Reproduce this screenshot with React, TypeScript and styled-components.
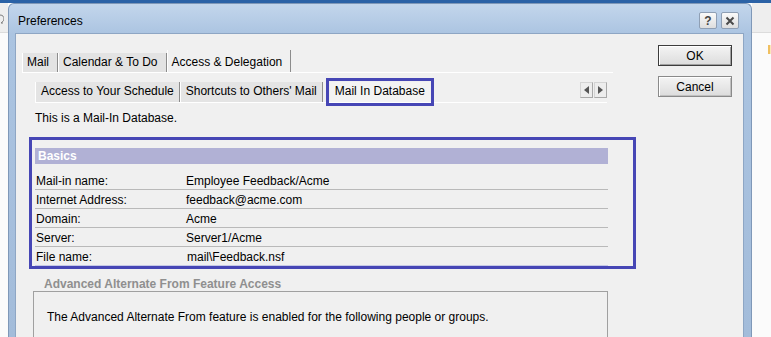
import React from "react";
import styled, { createGlobalStyle } from "styled-components";

const Global = createGlobalStyle`
  html, body { margin: 0; padding: 0; background: #ffffff; }
  body { font-family: "Liberation Sans", Arial, sans-serif; font-size: 12px; color: #000; }
  * { box-sizing: border-box; }
`;

const Page = styled.div`
  width: 771px;
  height: 337px;
  overflow: hidden;
  display: flex;
  flex-direction: column;
  background: #ffffff;
`;

const TopStrip = styled.div`
  height: 3px;
  flex: none;
  background: #2b62a6;
`;

const Body = styled.div`
  flex: 1;
  display: flex;
  min-height: 0;
`;

const Desk = styled.div<{ $w?: number }>`
  flex: ${(p) => (p.$w ? `0 0 ${p.$w}px` : "1")};
  display: flex;
  flex-direction: column;
  overflow: hidden;
`;

const DeskBar = styled.div`
  height: 30px;
  flex: none;
  background: #eeeeee;
  border-bottom: 1px solid #dcdcdc;
  display: flex;
  align-items: center;
`;

const DeskIcon = styled.svg`
  margin-top: 2px;
  flex: none;
`;

const DeskFill = styled.div`
  flex: 1;
  background: #fbfbfb;
  display: flex;
  flex-direction: column;
`;

const Mark = styled.div`
  margin: 12px 0 0 16px;
  width: 6px;
  height: 9px;
  background: #fbe6b8;
  border-left: 2px solid #f0c060;
`;

const Window = styled.div`
  flex: 0 0 744px;
  display: flex;
  flex-direction: column;
  background: linear-gradient(to bottom, #c3d6ec 0px, #abc4e1 30px, #a3bcda 100%);
  border: 1px solid #7f98b8;
  border-bottom: none;
  border-radius: 6px 6px 0 0;
  padding: 0 7px 0 6px;
`;

const TitleBar = styled.div`
  height: 29px;
  flex: none;
  display: flex;
  align-items: center;
  padding: 4px 5px 0 3px;
`;

const Title = styled.div`
  flex: 1;
  font-family: "Liberation Sans", Arial, sans-serif;
  font-size: 12px;
  color: #000;
`;

const CaptionButtons = styled.div`
  display: flex;
  gap: 4px;
`;

const CaptionButton = styled.div`
  width: 18px;
  height: 17px;
  border: 1px solid #8f9fb4;
  border-radius: 2px;
  background: linear-gradient(to bottom, #fafafa, #dedede);
  display: flex;
  align-items: center;
  justify-content: center;
  font-family: "Liberation Sans", Arial, sans-serif;
  font-weight: bold;
  font-size: 12px;
  color: #444;
`;

const Client = styled.div`
  flex: 1;
  display: flex;
  background: #f0f0f0;
  border: 1px solid #8ea6c4;
  border-bottom: none;
  min-height: 0;
`;

const MainPane = styled.div`
  flex: 1;
  padding: 16px 0 0 6px;
  display: flex;
  flex-direction: column;
`;

const TabStrip = styled.div<{ $width: number }>`
  display: flex;
  align-items: flex-end;
  width: ${(p) => p.$width}px;
  border-bottom: 1px solid #ffffff;
  flex: none;
`;

const MainTab = styled.div<{ $active?: boolean }>`
  height: ${(p) => (p.$active ? 22 : 19)}px;
  padding: ${(p) => (p.$active ? "3px" : "0")} 8px 0 4px;
  line-height: 19px;
  background: ${(p) => (p.$active ? "#f0f0f0" : "#e3e3e3")};
  border-left: 1px solid #ffffff;
  border-right: 1px solid #8c8c8c;
  white-space: nowrap;
`;

const Panel = styled.div`
  padding: 9px 0 0 13px;
  display: flex;
  flex-direction: column;
`;

const SubTabRow = styled.div`
  width: 572px;
  display: flex;
  align-items: flex-end;
  border-bottom: 1px solid #ffffff;
  height: 21px;
`;

const SubTab = styled.div<{ $active?: boolean }>`
  height: 20px;
  line-height: 19px;
  padding: 0 5px 0 5px;
  background: ${(p) => (p.$active ? "#f3f3f3" : "#e4e4e4")};
  border-right: ${(p) => (p.$active ? "none" : "1px solid #8c8c8c")};
  border-left: ${(p) => (p.$active ? "none" : "1px solid #ffffff")};
  margin-left: ${(p) => (p.$active ? "7px" : "0")};
  outline: ${(p) => (p.$active ? "3px solid #4646b5" : "none")};
  outline-offset: ${(p) => (p.$active ? "1px" : "0")};
  white-space: nowrap;
`;

const Spacer = styled.div`
  flex: 1;
`;

const ScrollButtons = styled.div`
  display: flex;
  gap: 1px;
  margin-bottom: 4px;
`;

const ScrollButton = styled.div`
  width: 13px;
  height: 16px;
  background: #ededed;
  border: 1px solid #d4d4d4;
  border-right-color: #a9a9a9;
  border-bottom-color: #a9a9a9;
  display: flex;
  align-items: center;
  justify-content: center;
`;

const Intro = styled.div`
  margin-top: 8px;
  line-height: 15px;
  height: 15px;
`;

const Highlight = styled.div`
  margin: 11px 0 0 -6px;
  width: 607px;
  border: 3px solid #4646b5;
  padding: 8px 25px 0 3px;
`;

const SectionHeader = styled.div`
  height: 16px;
  line-height: 16px;
  background: #b1b1d5;
  color: #ffffff;
  font-weight: bold;
  padding-left: 3px;
  margin-bottom: 7px;
`;

const Row = styled.div<{ $last?: boolean }>`
  display: grid;
  grid-template-columns: 150px 1fr;
  height: 19px;
  line-height: 18px;
  padding: 1px 0 0 1px;
  border-bottom: 1px solid ${(p) => (p.$last ? "#c5c8e6" : "#b9b9b9")};
`;

const Value = styled.span<{ $shift?: number }>`
  padding-left: ${(p) => p.$shift ?? 0}px;
`;

const SubHeading = styled.div`
  margin: 8px 0 0 9px;
  height: 14px;
  line-height: 14px;
  font-weight: bold;
  color: #8f8f8f;
`;

const GroupBox = styled.div`
  margin: 0 0 0 -2px;
  width: 575px;
  height: 60px;
  border: 1px solid #a0a0a0;
  border-bottom: none;
  padding: 18px 0 0 13px;
  line-height: 15px;
`;

const ButtonColumn = styled.div`
  flex: 0 0 85px;
  padding: 11px 0 0 0;
  display: flex;
  flex-direction: column;
  gap: 10px;
`;

const DialogButton = styled.div<{ $default?: boolean }>`
  width: 74px;
  height: 21px;
  display: flex;
  align-items: center;
  justify-content: center;
  border: 1px solid ${(p) => (p.$default ? "#3c3c3c" : "#8a8a8a")};
  box-shadow: inset 1px 1px 0 #ffffff, inset -1px -1px 0 ${(p) => (p.$default ? "#a0a0a0" : "#c0c0c0")};
  background: linear-gradient(to bottom, #f4f4f4, #dcdcdc);
  font-size: 12px;
`;

const rows: { label: string; value: string; shift?: number }[] = [
  { label: "Mail-in name:", value: "Employee Feedback/Acme" },
  { label: "Internet Address:", value: "feedback@acme.com" },
  { label: "Domain:", value: "Acme" },
  { label: "Server:", value: "Server1/Acme" },
  { label: "File name:", value: "mail\\Feedback.nsf", shift: 1 },
];

export default function App() {
  return (
    <>
      <Global />
      <Page>
        <TopStrip />
        <Body>
          <Desk $w={8}>
            <DeskBar>
              <DeskIcon width="4" height="10" viewBox="0 0 4 10">
                <path d="M0 1 C3 1 4 3 4 5 C4 7 2 8 1 9 L3 9" fill="none" stroke="#7a7a7a" strokeWidth="1" />
              </DeskIcon>
            </DeskBar>
            <DeskFill />
          </Desk>
          <Window>
            <TitleBar>
              <Title>Preferences</Title>
              <CaptionButtons>
                <CaptionButton>?</CaptionButton>
                <CaptionButton>
                  <svg width="10" height="10" viewBox="0 0 10 10">
                    <path d="M1.5 1.5 L8.5 8.5 M8.5 1.5 L1.5 8.5" stroke="#4a4a4a" strokeWidth="2" />
                  </svg>
                </CaptionButton>
              </CaptionButtons>
            </TitleBar>
            <Client>
              <MainPane>
                <TabStrip $width={591}>
                  <MainTab>Mail</MainTab>
                  <MainTab>Calendar &amp; To Do</MainTab>
                  <MainTab $active>Access &amp; Delegation</MainTab>
                </TabStrip>
                <Panel>
                  <SubTabRow>
                    <SubTab>Access to Your Schedule</SubTab>
                    <SubTab>Shortcuts to Others' Mail</SubTab>
                    <SubTab $active>Mail In Database</SubTab>
                    <Spacer />
                    <ScrollButtons>
                      <ScrollButton>
                        <svg width="5" height="8" viewBox="0 0 5 8">
                          <path d="M5 0 L0 4 L5 8 Z" fill="#555" />
                        </svg>
                      </ScrollButton>
                      <ScrollButton>
                        <svg width="5" height="8" viewBox="0 0 5 8">
                          <path d="M0 0 L5 4 L0 8 Z" fill="#555" />
                        </svg>
                      </ScrollButton>
                    </ScrollButtons>
                  </SubTabRow>
                  <Intro>This is a Mail-In Database.</Intro>
                  <Highlight>
                    <SectionHeader>Basics</SectionHeader>
                    {rows.map((r, i) => (
                      <Row key={r.label} $last={i === rows.length - 1}>
                        <span>{r.label}</span>
                        <Value $shift={r.shift}>{r.value}</Value>
                      </Row>
                    ))}
                  </Highlight>
                  <SubHeading>Advanced Alternate From Feature Access</SubHeading>
                  <GroupBox>
                    The Advanced Alternate From feature is enabled for the following people or groups.
                  </GroupBox>
                </Panel>
              </MainPane>
              <ButtonColumn>
                <DialogButton $default>OK</DialogButton>
                <DialogButton>Cancel</DialogButton>
              </ButtonColumn>
            </Client>
          </Window>
          <Desk>
            <DeskBar />
            <DeskFill>
              <Mark />
            </DeskFill>
          </Desk>
        </Body>
      </Page>
    </>
  );
}
